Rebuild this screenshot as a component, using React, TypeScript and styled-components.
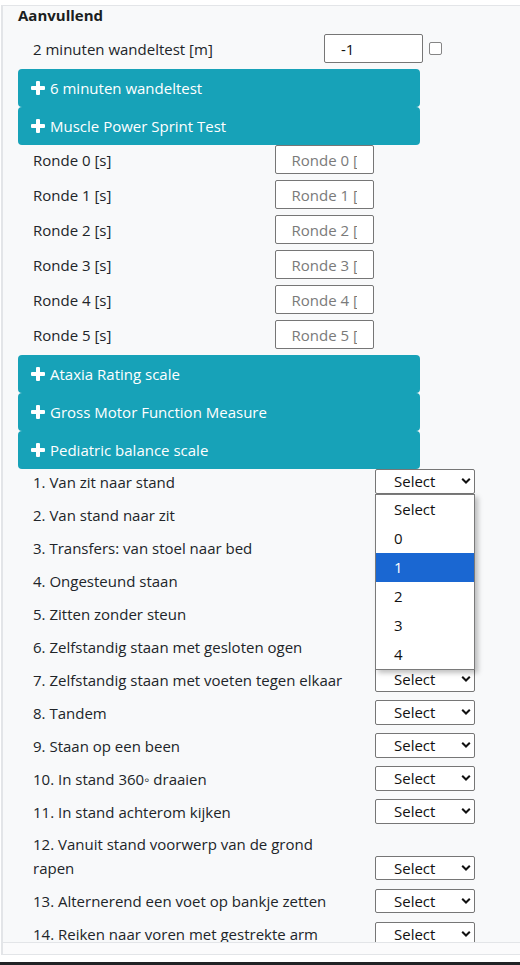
import React from "react";
import styled, { createGlobalStyle } from "styled-components";

const Global = createGlobalStyle`
  html, body { margin: 0; padding: 0; background: #ffffff; }
  body {
    font-family: "Open Sans", "Noto Sans", sans-serif;
    font-size: 15px;
    color: #212529;
  }
  * { box-sizing: border-box; }
`;

const Page = styled.div`
  height: 965px;
  display: flex;
  flex-direction: column;
  overflow: hidden;
`;

const Panel = styled.div`
  margin-top: 5px;
  margin-left: 1px;
  height: 938px;
  border-top: 1px solid #e3e5e8;
  border-left: 2px solid #e3e5e8;
  border-bottom: 1px solid #e3e5e8;
  background: #f8f9fa;
  padding-left: 15px;
  overflow: hidden;
`;

const Footer = styled.div`
  margin-left: 1px;
  height: 12px;
  border-left: 2px solid #e3e5e8;
  border-bottom: 1px solid #e3e5e8;
  background: #fbfbfc;
`;

const Spacer = styled.div`
  height: 7px;
  background: #ffffff;
`;

const TaskBar = styled.div`
  height: 3px;
  background: #202225;
`;

const Title = styled.div`
  margin-top: -3px;
  line-height: 24px;
  font-weight: 700;
  font-size: 15px;
  color: #1b1e21;
`;

const FieldRow = styled.div<{ $label: number; $top?: number }>`
  display: grid;
  grid-template-columns: ${(p) => p.$label}px 99px auto;
  align-items: center;
  column-gap: 0;
  height: 29px;
  margin-top: ${(p) => p.$top ?? 0}px;
  margin-bottom: 6px;
  padding-left: 15px;
`;

const Label = styled.label`
  line-height: 24px;
  color: #212529;
`;

const TextInput = styled.input`
  width: 99px;
  height: 29px;
  border: 1px solid #767676;
  border-radius: 2px;
  background: #ffffff;
  padding: 0 16px;
  font-family: inherit;
  font-size: 15px;
  color: #111;
  outline: none;
  &::placeholder { color: #7a7a7a; }
`;

const Check = styled.input`
  margin: 0 0 0 6px;
  width: 13px;
  height: 13px;
  appearance: none;
  border: 1px solid #858585;
  border-radius: 2px;
  background: #ffffff;
`;

const Header = styled.div`
  width: 402px;
  height: 38px;
  background: #17a2b8;
  border-radius: 4px;
  color: #ffffff;
  display: flex;
  align-items: center;
  gap: 5px;
  padding-left: 13px;
  line-height: 24px;
`;

const SelectRow = styled.div`
  display: grid;
  grid-template-columns: 342px 100px;
  align-items: end;
  padding-left: 15px;
  margin-bottom: 8.5px;
`;

const RowLabel = styled.span`
  line-height: 24px;
  max-width: 318px;
`;

const SelectWrap = styled.div`
  position: relative;
  width: 100px;
  height: 24.5px;
`;

const NativeSelect = styled.select`
  appearance: none;
  width: 100px;
  height: 24.5px;
  border: 1px solid #767676;
  border-radius: 2px;
  background: #ffffff;
  padding: 0 0 0 18px;
  font-family: inherit;
  font-size: 15px;
  color: #111;
  outline: none;
`;

const Chevron = styled.svg`
  position: absolute;
  right: 4px;
  top: 50%;
  transform: translateY(-50%);
  pointer-events: none;
`;

const Dropdown = styled.ul`
  position: absolute;
  top: 100%;
  left: 0;
  width: 100px;
  margin: 0;
  padding: 0;
  list-style: none;
  background: #ffffff;
  border: 1px solid #7a7a7a;
  box-shadow: 3px 3px 5px rgba(0, 0, 0, 0.25);
  z-index: 5;
`;

const Option = styled.li<{ $active?: boolean }>`
  height: 29px;
  display: flex;
  align-items: center;
  padding-left: 18px;
  font-size: 15px;
  background: ${(p) => (p.$active ? "#1a67d2" : "transparent")};
  color: ${(p) => (p.$active ? "#ffffff" : "#111")};
`;

const PlusIcon = () => (
  <svg width="14" height="14" viewBox="0 0 14 14">
    <rect x="0" y="5" width="14" height="4" rx="1" fill="#fff" />
    <rect x="5" y="0" width="4" height="14" rx="1" fill="#fff" />
  </svg>
);

const ChevronIcon = () => (
  <Chevron width="10" height="7" viewBox="0 0 10 7">
    <path d="M1.2 1.2 L5 5 L8.8 1.2" fill="none" stroke="#111" strokeWidth="2" />
  </Chevron>
);

const Section = ({ title }: { title: string }) => (
  <Header>
    <PlusIcon />
    <span>{title}</span>
  </Header>
);

const rondes = [0, 1, 2, 3, 4, 5];

const pbs = [
  "1. Van zit naar stand",
  "2. Van stand naar zit",
  "3. Transfers: van stoel naar bed",
  "4. Ongesteund staan",
  "5. Zitten zonder steun",
  "6. Zelfstandig staan met gesloten ogen",
  "7. Zelfstandig staan met voeten tegen elkaar",
  "8. Tandem",
  "9. Staan op een been",
  "10. In stand 360◦ draaien",
  "11. In stand achterom kijken",
  "12. Vanuit stand voorwerp van de grond rapen",
  "13. Alternerend een voet op bankje zetten",
  "14. Reiken naar voren met gestrekte arm",
];

const options = ["Select", "0", "1", "2", "3", "4"];

export default function App() {
  return (
    <Page>
      <Global />
      <Panel>
        <Title>Aanvullend</Title>
        <FieldRow $label={291} $top={7}>
          <Label>2 minuten wandeltest [m]</Label>
          <TextInput defaultValue="-1" />
          <Check type="checkbox" />
        </FieldRow>
        <Section title="6 minuten wandeltest" />
        <Section title="Muscle Power Sprint Test" />
        {rondes.map((r) => (
          <FieldRow key={r} $label={241.5}>
            <Label>Ronde {r} [s]</Label>
            <TextInput placeholder={`Ronde ${r} [s]`} />
          </FieldRow>
        ))}
        <Section title="Ataxia Rating scale" />
        <Section title="Gross Motor Function Measure" />
        <Section title="Pediatric balance scale" />
        {pbs.map((t, i) => (
          <SelectRow key={t}>
            <RowLabel>{t}</RowLabel>
            <SelectWrap>
              <NativeSelect defaultValue="Select">
                {options.map((o) => (
                  <option key={o}>{o}</option>
                ))}
              </NativeSelect>
              <ChevronIcon />
              {i === 0 && (
                <Dropdown>
                  {options.map((o) => (
                    <Option key={o} $active={o === "1"}>
                      {o}
                    </Option>
                  ))}
                </Dropdown>
              )}
            </SelectWrap>
          </SelectRow>
        ))}
      </Panel>
      <Footer />
      <Spacer />
      <TaskBar />
    </Page>
  );
}
